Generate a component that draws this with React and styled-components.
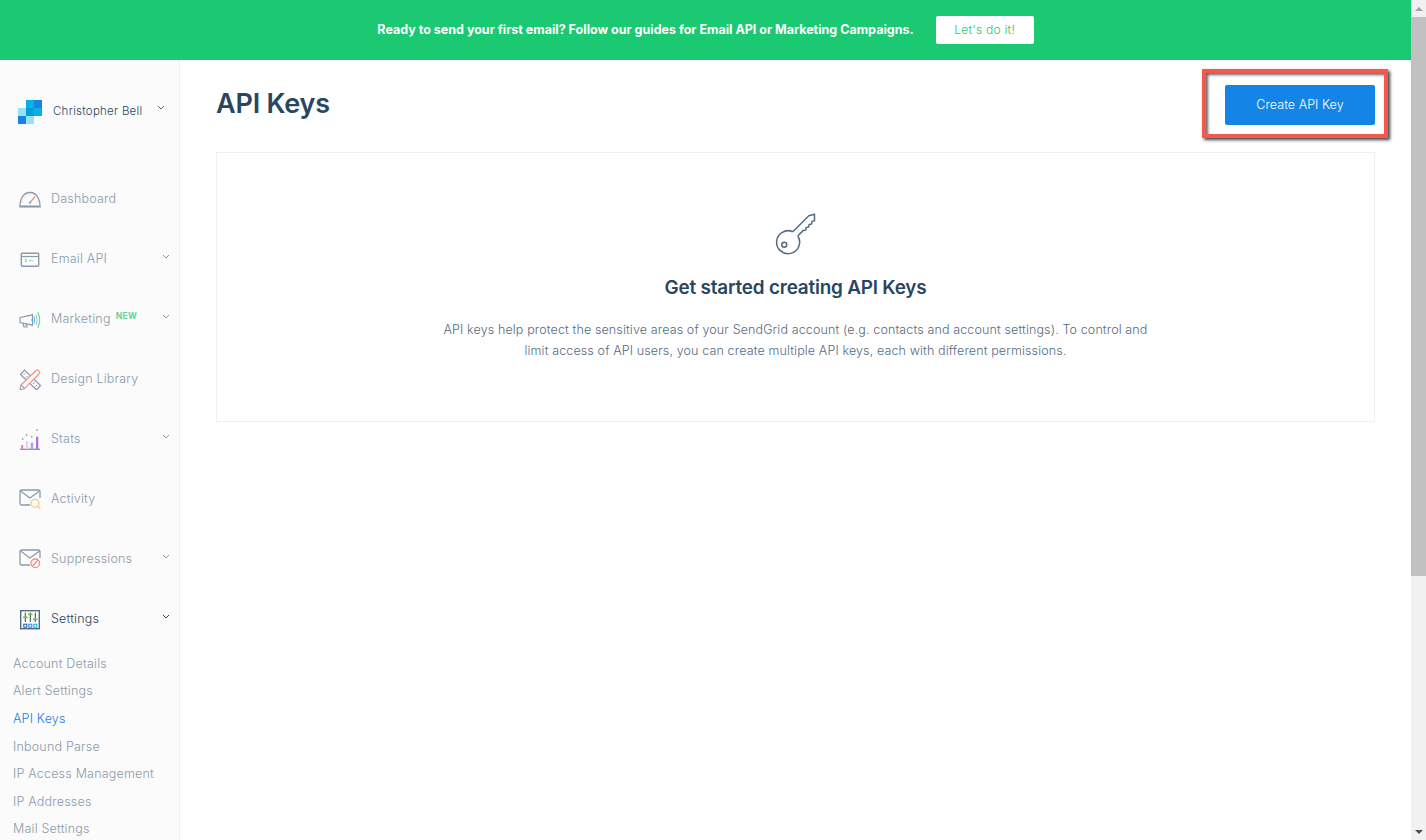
import React from 'react';
import styled, { createGlobalStyle } from 'styled-components';

const GlobalStyle = createGlobalStyle`
  html, body {
    height: 100%;
    margin: 0;
    overflow: hidden;
  }
  body {
    background: #fff;
    font-family: Inter, "Liberation Sans", sans-serif;
  }
  * {
    box-sizing: border-box;
  }
`;

const Page = styled.div`
  display: flex;
  height: 840px;
  width: 1426px;
`;

const Viewport = styled.div`
  display: flex;
  flex: 1 1 auto;
  flex-direction: column;
  min-width: 0;
`;

const Banner = styled.div`
  align-items: center;
  background: #1ac971;
  display: flex;
  flex: 0 0 60px;
  gap: 22px;
  justify-content: center;
`;

const BannerText = styled.span`
  color: #fff;
  font-size: 12.5px;
  font-weight: 700;
  margin-top: -2px;
`;

const BannerButton = styled.button`
  background: #fff;
  border: 0;
  border-radius: 2px;
  color: #1ac971;
  font-family: inherit;
  font-size: 12px;
  font-weight: 300;
  height: 28px;
  letter-spacing: 0.25px;
  padding: 0 0 2px;
  width: 98px;
`;

const Body = styled.div`
  display: flex;
  flex: 1 1 auto;
  min-height: 0;
`;

const Sidebar = styled.nav`
  background: #fbfbfc;
  border-right: 1px solid #eef0f3;
  flex: 0 0 180px;
  overflow: hidden;
`;

const Account = styled.div`
  align-items: center;
  display: flex;
  height: 100px;
  padding: 0 14px 0 18px;
`;

const LogoMark = styled.svg`
  flex: 0 0 24px;
  margin-top: 4px;
`;

const AccountName = styled.span`
  color: #294661;
  flex: 1 1 auto;
  font-size: 11.5px;
  font-weight: 300;
  letter-spacing: 0.25px;
  margin-left: 11px;
  padding-top: 1px;
`;

const NavList = styled.div`
  display: flex;
  flex-direction: column;
  padding-top: 8px;
`;

const NavRow = styled.div`
  align-items: center;
  color: ${(props) => (props.$active ? '#294661' : '#8a9aab')};
  display: flex;
  font-size: 12.5px;
  font-weight: 300;
  height: 60px;
  letter-spacing: 0.2px;
  padding: 0 9px 0 18px;
`;

const NavIcon = styled.span`
  align-items: center;
  display: flex;
  flex: 0 0 24px;
  height: 24px;
  justify-content: center;
  margin-right: 9px;
`;

const NavLabel = styled.span`
  flex: 1 1 auto;
`;

const NewTag = styled.span`
  color: #5fd69a;
  font-size: 8.5px;
  font-weight: 700;
  letter-spacing: 0.4px;
  margin-left: 5px;
  margin-right: auto;
  position: relative;
  top: -2px;
`;

const ChevronMark = styled.svg`
  flex: 0 0 8px;
  margin-top: ${(props) => (props.$raised ? '-5px' : '-3px')};
`;

const SubList = styled.div`
  display: flex;
  flex-direction: column;
  padding-left: 13px;
  padding-top: 1.3px;
`;

const SubRow = styled.div`
  align-items: center;
  color: ${(props) => (props.$active ? '#1a82e2' : '#8a9aab')};
  display: flex;
  font-size: 12.5px;
  font-weight: 300;
  height: 27.65px;
  letter-spacing: 0.2px;
`;

const Main = styled.main`
  flex: 1 1 auto;
  min-width: 0;
  padding: 0 36px;
`;

const Header = styled.header`
  align-items: center;
  display: flex;
  height: 90px;
  justify-content: space-between;
  margin-bottom: 2px;
`;

const Title = styled.h1`
  color: #294661;
  font-size: 27px;
  font-weight: 600;
  letter-spacing: -0.2px;
  margin: 0 0 3px;
`;

const CreateWrap = styled.div`
  position: relative;
`;

const CreateButton = styled.button`
  background: #1485e6;
  border: 0;
  border-radius: 2px;
  color: #fff;
  display: block;
  font-family: inherit;
  font-size: 12.5px;
  font-weight: 300;
  height: 40px;
  letter-spacing: 0.05px;
  padding: 0 0 2px;
  width: 150px;
`;

const Annotation = styled.div`
  border: 4px solid #f7574d;
  bottom: -13px;
  box-shadow: 2px 2px 3px rgba(0, 0, 0, 0.75), inset 2px 2px 3px rgba(0, 0, 0, 0.6);
  left: -23px;
  pointer-events: none;
  position: absolute;
  right: -13px;
  top: -16px;
`;

const EmptyCard = styled.section`
  align-items: center;
  border: 1px solid #eef0f3;
  display: flex;
  flex-direction: column;
  height: 270px;
  padding-top: 60px;
`;

const KeyMark = styled.svg`
  margin-left: -2px;
`;

const EmptyTitle = styled.h2`
  color: #294661;
  font-size: 18.9px;
  font-weight: 600;
  letter-spacing: -0.2px;
  margin: 21px 0 0;
`;

const EmptyText = styled.p`
  color: #546b81;
  font-size: 12.5px;
  font-weight: 300;
  letter-spacing: 0.13px;
  line-height: 21px;
  margin: 20px 0 0;
  text-align: center;
  width: 712px;
`;

const Scrollbar = styled.div`
  background: #f1f1f1;
  display: flex;
  flex: 0 0 15px;
  flex-direction: column;
`;

const ScrollArrow = styled.div`
  align-items: center;
  display: flex;
  flex: 0 0 17px;
  justify-content: center;
`;

const ScrollThumb = styled.div`
  background: #c1c1c1;
  flex: 0 0 559px;
`;

const ScrollTrack = styled.div`
  flex: 1 1 auto;
`;

const Arrow = styled.span`
  border-left: 4px solid transparent;
  border-right: 4px solid transparent;
  ${(props) => (props.$down ? 'border-top: 4px solid #505050;' : 'border-bottom: 4px solid #a3a3a3;')}
`;

const Chevron = ({ color = '#8a9aab', raised }) => (
  <ChevronMark $raised={raised} width="8" height="5" viewBox="0 0 8 5" fill="none">
    <path d="M1 1l3 3 3-3" stroke={color} strokeWidth="1" />
  </ChevronMark>
);

const Logo = () => (
  <LogoMark width="24" height="24" viewBox="0 0 24 24">
    <rect x="8" y="0" width="8" height="8" fill="#00b3e3" />
    <rect x="16" y="0" width="8" height="8" fill="#1a82e2" />
    <rect x="0" y="8" width="8" height="8" fill="#99e1f4" />
    <rect x="8" y="8" width="8" height="8" fill="#009dd9" />
    <rect x="16" y="8" width="8" height="8" fill="#00b3e3" />
    <rect x="0" y="16" width="8" height="8" fill="#1a82e2" />
    <rect x="8" y="16" width="8" height="8" fill="#99e1f4" />
  </LogoMark>
);

const DashboardIcon = () => (
  <svg width="24" height="24" viewBox="0 0 24 24" fill="none">
    <path d="M2 20.500C2 12 6 6.500 12 6.500S22 12 22 20.500z" stroke="#8a9aab" strokeWidth="1.300" />
    <path d="M1.500 20.500h21" stroke="#8a9aab" strokeWidth="1.800" />
    <path d="M12 8.500v1.500M6.500 11l1 1M17.800 11l-1 1M4 16h1.500M18.500 16H20" stroke="#f7d79c" strokeWidth="1" />
    <path d="M12 16.500l5-6" stroke="#f2917f" strokeWidth="1.200" />
    <circle cx="12" cy="16.700" r="1.100" fill="#5aa5ec" />
  </svg>
);

const EmailApiIcon = () => (
  <svg width="24" height="24" viewBox="0 0 24 24" fill="none">
    <rect x="3.300" y="7.300" width="17.400" height="13" rx="1" stroke="#8a9aab" strokeWidth="1.400" />
    <path d="M3.300 10.500h17.400" stroke="#8a9aab" strokeWidth="1.200" />
    <path d="M7 13l2 1.500L7 16" stroke="#5fd69a" strokeWidth="1" />
    <path d="M11 14.700h4" stroke="#8fdcb6" strokeWidth="1.200" />
  </svg>
);

const MarketingIcon = () => (
  <svg width="24" height="24" viewBox="0 0 24 24" fill="none">
    <path d="M2 11.500l12.500-2.700v10.400L2 16.500z" stroke="#8a9aab" strokeWidth="1.200" />
    <path d="M5 17l1 4h3l-1-3.500" stroke="#8a9aab" strokeWidth="1.200" />
    <circle cx="14.300" cy="14" r="1.100" fill="#5aa5ec" />
    <path d="M16 10.500c1 2.200 1 4.800 0 7" stroke="#5aa5ec" strokeWidth="1" />
    <path d="M17.800 8.500c1.600 3.500 1.600 7.500 0 11" stroke="#8fdcb6" strokeWidth="1.100" />
    <path d="M19.800 6c2.400 5 2.400 11 0 16" stroke="#5fd69a" strokeWidth="1.100" />
  </svg>
);

const DesignIcon = () => (
  <svg width="24" height="24" viewBox="0 0 24 24" fill="none">
    <path d="M2.500 8.500L6.500 4l16 15.500-4 4.500z" stroke="#8a9aab" strokeWidth="1.200" />
    <path d="M5.500 9l1.500-1.500M8 11.500l1.500-1.500M15 18l1.500-1.500M17.500 20.500l1.500-1.500" stroke="#8a9aab" strokeWidth="1" />
    <path d="M3 19L18.200 4.300c1.300-1.300 4.600 1.800 3.300 3.200L6.500 22.500z" fill="#fbfbfc" stroke="#f2917f" strokeWidth="1.200" />
    <path d="M3 19l3.500 3.500L2 24z" fill="#fbfbfc" stroke="#8a9aab" strokeWidth="1" />
  </svg>
);

const StatsIcon = () => (
  <svg width="24" height="24" viewBox="0 0 24 24" fill="none">
    <path d="M2 23.300h20" stroke="#8a9aab" strokeWidth="1.400" />
    <rect x="3" y="19" width="2.300" height="4" fill="#f488ad" />
    <rect x="7.800" y="15" width="2.300" height="8" fill="#e6d0f5" />
    <rect x="12.800" y="16.700" width="2.300" height="6.300" fill="#a99cf0" />
    <rect x="18" y="10.700" width="2.300" height="12.300" fill="#ab74d9" />
    <path d="M4.700 12.200v1.600M8.700 8.200v1.600M13.700 9.900v1.600M19 3.200v1.600" stroke="#8a9aab" strokeWidth="1.500" />
  </svg>
);

const MailBase = () => (
  <>
    <path d="M12 19H3.500a1.500 1.500 0 0 1-1.500-1.500V5.500A1.500 1.500 0 0 1 3.500 4h17A1.500 1.500 0 0 1 22 5.500V12" stroke="#8a9aab" strokeWidth="1.300" />
    <path d="M2.500 5l9.500 7 9.500-7" stroke="#8a9aab" strokeWidth="1.200" />
  </>
);

const ActivityIcon = () => (
  <svg width="24" height="24" viewBox="0 0 24 24" fill="none">
    <MailBase />
    <circle cx="17" cy="17.300" r="4" fill="#fbfbfc" stroke="#f9c97f" strokeWidth="1.300" />
    <path d="M19.800 20.200l2.500 2.500" stroke="#f9c97f" strokeWidth="1.300" />
  </svg>
);

const SuppressionsIcon = () => (
  <svg width="24" height="24" viewBox="0 0 24 24" fill="none">
    <MailBase />
    <circle cx="17.300" cy="17.300" r="4.300" fill="#fbfbfc" stroke="#f2917f" strokeWidth="1.300" />
    <path d="M14.300 20.300l6-6" stroke="#f2917f" strokeWidth="1.300" />
  </svg>
);

const SettingsIcon = () => (
  <svg width="24" height="24" viewBox="0 0 24 24" fill="none">
    <rect x="2.700" y="4.700" width="18.600" height="18" fill="#fff" stroke="#546b81" strokeWidth="1.400" />
    <path d="M7.300 6.500V16M12.300 6.500V16M17.300 6.500V16" stroke="#294661" strokeWidth="1" />
    <path d="M5 11.300h4.600M10 8.300h4.600M15 13.300h4.600" stroke="#6fc63c" strokeWidth="1.800" />
    <rect x="5.800" y="18.200" width="3" height="3" stroke="#1a4fb0" strokeWidth="1" />
    <rect x="10.800" y="18.200" width="3" height="3" stroke="#1a82e2" strokeWidth="1" />
    <rect x="15.800" y="18.200" width="3" height="3" stroke="#00b3e3" strokeWidth="1" />
  </svg>
);

const KeyIcon = () => (
  <KeyMark width="42" height="42" viewBox="0 0 42 42" fill="none">
    <path d="M18.800 18.700A11.500 11.500 0 1 0 23.800 23" stroke="#546b81" strokeWidth="1.500" />
    <circle cx="10.200" cy="31.700" r="2.500" stroke="#546b81" strokeWidth="1.500" />
    <path d="M18.800 18.700L34.800 2.700l5.700-1.400v6.400l-2.500.7-.4 2.600-2.500.4-.4 2.600-2.500.4-.4 2.500-2.500.5L23.800 23" stroke="#546b81" strokeWidth="1.500" strokeLinejoin="round" />
  </KeyMark>
);

const NAV_ITEMS = [
  { label: 'Dashboard', icon: <DashboardIcon /> },
  { label: 'Email API', icon: <EmailApiIcon />, expandable: true },
  { label: 'Marketing', icon: <MarketingIcon />, expandable: true, tag: 'NEW' },
  { label: 'Design Library', icon: <DesignIcon /> },
  { label: 'Stats', icon: <StatsIcon />, expandable: true },
  { label: 'Activity', icon: <ActivityIcon /> },
  { label: 'Suppressions', icon: <SuppressionsIcon />, expandable: true },
  { label: 'Settings', icon: <SettingsIcon />, expandable: true, active: true },
];

const SETTINGS_ITEMS = [
  'Account Details',
  'Alert Settings',
  'API Keys',
  'Inbound Parse',
  'IP Access Management',
  'IP Addresses',
  'Mail Settings',
];

const App = () => (
  <Page>
    <GlobalStyle />
    <Viewport>
      <Banner>
        <BannerText>Ready to send your first email? Follow our guides for Email API or Marketing Campaigns.</BannerText>
        <BannerButton>Let's do it!</BannerButton>
      </Banner>
      <Body>
        <Sidebar>
          <Account>
            <Logo />
            <AccountName>Christopher Bell</AccountName>
            <Chevron color="#546b81" raised />
          </Account>
          <NavList>
            {NAV_ITEMS.map((item) => (
              <NavRow key={item.label} $active={item.active}>
                <NavIcon>{item.icon}</NavIcon>
                {item.tag
                  ? (
                    <>
                      <span>{item.label}</span>
                      <NewTag>{item.tag}</NewTag>
                    </>
                  )
                  : <NavLabel>{item.label}</NavLabel>}
                {item.expandable && <Chevron color={item.active ? '#294661' : '#8a9aab'} />}
              </NavRow>
            ))}
          </NavList>
          <SubList>
            {SETTINGS_ITEMS.map((label) => (
              <SubRow key={label} $active={label === 'API Keys'}>{label}</SubRow>
            ))}
          </SubList>
        </Sidebar>
        <Main>
          <Header>
            <Title>API Keys</Title>
            <CreateWrap>
              <CreateButton>Create API Key</CreateButton>
              <Annotation />
            </CreateWrap>
          </Header>
          <EmptyCard>
            <KeyIcon />
            <EmptyTitle>Get started creating API Keys</EmptyTitle>
            <EmptyText>
              API keys help protect the sensitive areas of your SendGrid account (e.g. contacts and account settings). To control and limit access of API users, you can create multiple API keys, each with different permissions.
            </EmptyText>
          </EmptyCard>
        </Main>
      </Body>
    </Viewport>
    <Scrollbar>
      <ScrollArrow><Arrow /></ScrollArrow>
      <ScrollThumb />
      <ScrollTrack />
      <ScrollArrow><Arrow $down /></ScrollArrow>
    </Scrollbar>
  </Page>
);

export default App;
